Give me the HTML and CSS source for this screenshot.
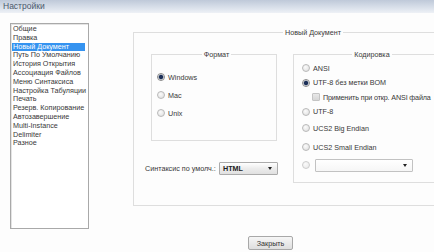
FILE: index.html
```html
<!DOCTYPE html>
<html lang="ru">
<head>
    <meta charset="UTF-8">
    <meta name="viewport" content="width=device-width, initial-scale=1.0">
    <title>Настройки</title>
    <link rel="stylesheet" href="styles.css">
</head>
<body>
    <div class="window">
        <div class="titlebar">Настройки</div>

        <div class="content">
            <ul class="nav">
                <li>Общие</li>
                <li>Правка</li>
                <li class="active">Новый Документ</li>
                <li>Путь По Умолчанию</li>
                <li>История Открытия</li>
                <li>Ассоциация Файлов</li>
                <li>Меню Синтаксиса</li>
                <li>Настройка Табуляции</li>
                <li>Печать</li>
                <li>Резерв. Копирование</li>
                <li>Автозавершение</li>
                <li>Multi-Instance</li>
                <li>Delimiter</li>
                <li>Разное</li>
            </ul>

            <div class="pane">
                <fieldset class="group outer">
                    <legend>Новый Документ</legend>
                    <div class="columns">
                        <div class="left">
                            <fieldset class="group format">
                                <legend>Формат</legend>
                                <label class="row"><input type="radio" name="eol" checked>Windows</label>
                                <label class="row"><input type="radio" name="eol">Mac</label>
                                <label class="row"><input type="radio" name="eol">Unix</label>
                            </fieldset>
                            <div class="syntax">
                                <span class="syntax-label">Синтаксис по умолч.:</span>
                                <div class="combo combo-syntax"><span>HTML</span><i class="arrow"></i></div>
                            </div>
                        </div>

                        <fieldset class="group encoding">
                            <legend>Кодировка</legend>
                            <label class="enc enc-ansi"><input type="radio" name="enc">ANSI</label>
                            <label class="enc enc-bom"><input type="radio" name="enc" checked>UTF-8 без метки BOM</label>
                            <label class="enc enc-check"><input type="checkbox"><span class="tight">Применить при откр. ANSI файла</span></label>
                            <label class="enc enc-utf"><input type="radio" name="enc">UTF-8</label>
                            <label class="enc enc-big"><input type="radio" name="enc">UCS2 Big Endian</label>
                            <label class="enc enc-small"><input type="radio" name="enc">UCS2 Small Endian</label>
                            <div class="enc enc-other">
                                <input type="radio" name="enc">
                                <div class="combo combo-enc"><span></span><i class="arrow"></i></div>
                            </div>
                        </fieldset>
                    </div>
                </fieldset>

                <button class="close-btn">Закрыть</button>
            </div>
        </div>
    </div>
</body>
</html>
```

FILE: styles.css
```css
body {
    margin: 0;
    width: 434px;
    height: 252px;
    overflow: hidden;
    background: #fdfdfd;
    font-family: "Liberation Sans", Arial, sans-serif;
    font-size: 7.2px;
    color: #383838;
}

.window {
    width: 434px;
    height: 252px;
    overflow: hidden;
}

.titlebar {
    height: 13px;
    line-height: 12px;
    padding-left: 3px;
    font-size: 8.5px;
    color: #4a586c;
    background: linear-gradient(#bfc9d9, #dfe5ee 70%, #eef1f6);
}

.content {
    display: flex;
    align-items: flex-start;
}

/* left list of pages */
.nav {
    list-style: none;
    margin: 10px 0 0 10px;
    padding: 1px 0 0 0;
    width: 79px;
    height: 206px;
    box-sizing: border-box;
    border: 1px solid #a9a9a9;
    background: #fff;
    box-shadow: inset 1px 1px 0 #e4e4e4;
}

.nav li {
    line-height: 8.8px;
    height: 8.8px;
    margin: 0 3px 0 1px;
    padding-left: 1px;
    white-space: nowrap;
}

.nav li.active {
    background: #3593f0;
    color: #fff;
}

.pane {
    margin-left: 44px;
}

/* group boxes */
.group {
    margin: 0;
    border: 1px solid #dedede;
    box-sizing: border-box;
    min-width: 0;
}

.group legend {
    margin: 0 auto;
    padding: 0 2px;
    line-height: 9px;
    color: #3a3a3a;
}

.outer {
    margin-top: 15px;
    width: 343px;
    padding: 13px 0 22px 17px;
}

.columns {
    display: flex;
    align-items: flex-start;
    gap: 15px;
}

.format {
    width: 126px;
    padding: 9px 0 18px 5px;
}

.row {
    display: flex;
    align-items: center;
    height: 18px;
}

/* radio buttons and check box */
input[type="radio"],
input[type="checkbox"] {
    appearance: none;
    margin: 0 3px 0 0;
    width: 8px;
    height: 8px;
    flex: none;
    box-sizing: border-box;
    border: 1px solid #b9b9b9;
    background: radial-gradient(circle at 40% 35%, #fbfbfb, #dcdcdc);
}

input[type="radio"] {
    border-radius: 50%;
}

input[type="radio"]:checked {
    border-color: #8a8a8a;
    background: radial-gradient(circle, #1c2f57 0 1.6px, #6d7d99 2.2px, #eeeeee 2.8px);
}

input[type="checkbox"] {
    border-radius: 1px;
    border-color: #c4c4c4;
    background: linear-gradient(#e8e8e8, #d6d6d6);
}

.syntax {
    display: flex;
    align-items: center;
    margin: 21px 0 0 -6px;
    height: 13px;
}

.syntax-label {
    width: 74px;
    white-space: nowrap;
}

.combo {
    position: relative;
    height: 13px;
    box-sizing: border-box;
    border: 1px solid #ababab;
    border-radius: 1px;
    background: linear-gradient(#ffffff, #ececec 50%, #e0e0e0);
    line-height: 11px;
    padding-left: 3px;
}

.combo-syntax {
    width: 59px;
    font-weight: bold;
    color: #222;
}

.combo-enc {
    width: 98px;
    background: linear-gradient(#ffffff, #f6f6f6);
    border-color: #c2c2c2;
}

.arrow {
    position: absolute;
    right: 5px;
    top: 4px;
    border-left: 2.5px solid transparent;
    border-right: 2.5px solid transparent;
    border-top: 3px solid #222;
}

/* encoding box */
.encoding {
    width: 150px;
    padding: 2px 0 9px 8px;
}

.enc {
    display: flex;
    align-items: center;
    white-space: nowrap;
}

.enc-ansi { height: 14px; }
.enc-bom { height: 15px; }
.enc-check { height: 14px; padding-left: 10px; }
.enc-utf { height: 15px; }
.enc-big { height: 18px; }
.enc-small { height: 20px; }
.enc-other { height: 16px; }

.tight {
    letter-spacing: -0.15px;
}

.enc-other input {
    margin-right: 5px;
    opacity: 0.7;
}

.close-btn {
    display: block;
    margin: 30px 0 0 115px;
    width: 45px;
    height: 14px;
    padding: 0;
    font-family: inherit;
    font-size: 7.2px;
    color: #333;
    border: 1px solid #a8a8a8;
    border-radius: 2px;
    background: linear-gradient(#f6f6f6, #dedede);
}
```
